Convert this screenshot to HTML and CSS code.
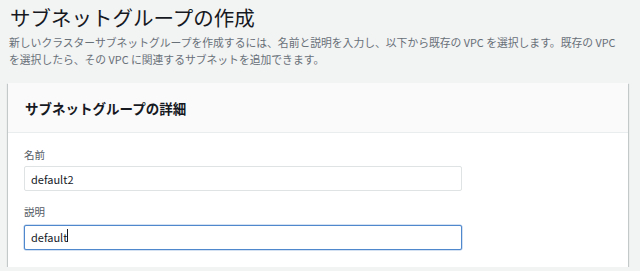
FILE: index.html
```html
<!DOCTYPE html>
<html lang="ja">
<head>
<meta charset="utf-8">
<title>サブネットグループの作成</title>
<link rel="stylesheet" href="styles.css">
</head>
<body>
<main class="page">
  <h1 class="title">サブネットグループの作成</h1>
  <p class="desc">新しいクラスターサブネットグループを作成するには、名前と説明を入力し、以下から既存の VPC を選択します。既存の VPC<br>を選択したら、その VPC に関連するサブネットを追加できます。</p>
  <section class="card">
    <header class="card-header">
      <h2 class="card-title">サブネットグループの詳細</h2>
    </header>
    <div class="card-body">
      <div class="field">
        <label class="label" for="name">名前</label>
        <input class="input" id="name" type="text" value="default2">
      </div>
      <div class="field">
        <label class="label" for="desc">説明</label>
        <div class="input-wrap">
          <input class="input input-focus" id="desc" type="text" value="default">
          <span class="caret"></span>
        </div>
      </div>
    </div>
  </section>
</main>
</body>
</html>
```
FILE: styles.css
```css
html, body {
  margin: 0;
  padding: 0;
  background: #f2f3f3;
}
body {
  font-family: "Noto Sans CJK JP", "Noto Sans", sans-serif;
  color: #16191f;
}
.page {
  display: flex;
  flex-direction: column;
  padding: 4px 12px 0 8px;
}
.title {
  margin: 0 0 0 2px;
  font-size: 20.5px;
  line-height: 26px;
  font-weight: 400;
  color: #16191f;
}
.desc {
  margin: 4px 0 0 1px;
  font-size: 10.8px;
  line-height: 17px;
  color: #687078;
  white-space: nowrap;
}
.card {
  margin-top: 15px;
  background: #fff;
  box-shadow: 0 1px 1px 0 rgba(0, 28, 36, 0.3), 1px 1px 1px 0 rgba(0, 28, 36, 0.15), -1px 1px 1px 0 rgba(0, 28, 36, 0.15);
}
.card-header {
  display: flex;
  align-items: center;
  height: 49px;
  padding: 0 17px;
  background: #fafafa;
  border-bottom: 1px solid #eaeded;
}
.card-title {
  margin: 0;
  font-size: 13.5px;
  line-height: 18px;
  font-weight: 700;
  color: #16191f;
}
.card-body {
  display: flex;
  flex-direction: column;
  gap: 13px;
  padding: 14px 16px 17px;
}
.field {
  display: flex;
  flex-direction: column;
  gap: 4px;
}
.label {
  font-size: 10.5px;
  line-height: 15px;
  color: #545b64;
}
.input-wrap {
  position: relative;
  width: 438px;
}
.input {
  box-sizing: border-box;
  width: 438px;
  height: 25px;
  margin: 0;
  padding: 0 6px;
  border: 1px solid #dfe3e3;
  border-radius: 2px;
  font-family: "Noto Sans CJK JP", "Noto Sans", sans-serif;
  font-size: 11px;
  color: #16191f;
  background: #fff;
  outline: none;
}
.input-focus {
  border-color: #4f88cc;
  box-shadow: 0 0 0 0.5px rgba(79, 136, 204, 0.5);
}
.caret {
  position: absolute;
  left: 42.5px;
  top: 6px;
  width: 1px;
  height: 13px;
  background: #16191f;
}
```
